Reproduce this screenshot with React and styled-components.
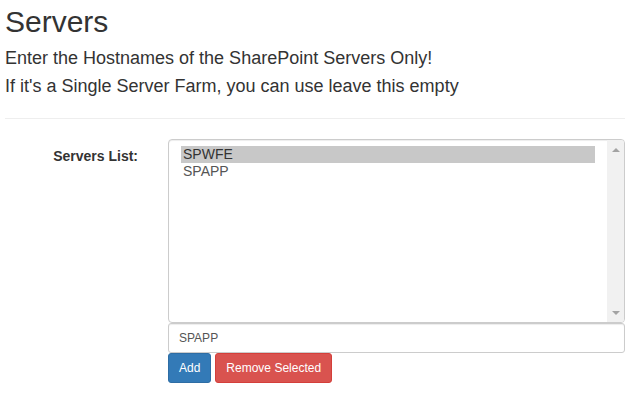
import React, { useState } from 'react'
import styled, { createGlobalStyle } from 'styled-components'

const GlobalStyle = createGlobalStyle`
  body {
    margin: 0;
    background: #fff;
    font-family: "Liberation Sans", Arial, Helvetica, sans-serif;
    font-size: 14px;
    color: #333;
  }
`

const Page = styled.div`
  padding: 5px 9px 0 5px;
`

const Title = styled.h2`
  margin: 0;
  font-size: 30px;
  font-weight: 500;
  line-height: 33px;
`

const Intro = styled.p`
  margin: ${p => (p.first ? '6px' : '0')} 0 0;
  font-size: 18px;
  line-height: 28px;
`

const Divider = styled.hr`
  margin: 18px 0 20px;
  border: 0;
  border-top: 1px solid #eee;
`

const FormRow = styled.div`
  display: grid;
  grid-template-columns: 133px 1fr;
  column-gap: 30px;
`

const Label = styled.label`
  padding-top: 7px;
  text-align: right;
  font-weight: bold;
  line-height: 20px;
`

const Controls = styled.div`
  display: flex;
  flex-direction: column;
`

const Listbox = styled.div`
  display: flex;
  height: 184px;
  box-sizing: border-box;
  border: 1px solid #ccc;
  border-radius: 4px;
  box-shadow: inset 0 1px 1px rgba(0, 0, 0, 0.075);
  overflow: hidden;
`

const Options = styled.div`
  flex: 1;
  padding: 6px 12px;
`

const Option = styled.div`
  height: 17px;
  line-height: 17px;
  padding-left: 2px;
  font-size: 14px;
  color: ${p => (p.selected ? '#333' : '#555')};
  background: ${p => (p.selected ? '#c8c8c8' : 'transparent')};
  cursor: default;
`

const Scrollbar = styled.div`
  width: 17px;
  background: #f1f1f1;
  display: flex;
  flex-direction: column;
  justify-content: space-between;
  align-items: center;
  padding: 8px 0 7px;
`

const Arrow = styled.span`
  width: 0;
  height: 0;
  border-left: 4px solid transparent;
  border-right: 4px solid transparent;
  ${p => (p.down ? 'border-top: 4px solid #a3a3a3;' : 'border-bottom: 4px solid #a3a3a3;')}
`

const TextInput = styled.input`
  height: 30px;
  box-sizing: border-box;
  padding: 5px 10px;
  border: 1px solid #ccc;
  border-radius: 3px;
  font-family: inherit;
  font-size: 12px;
  color: #555;
  box-shadow: inset 0 1px 1px rgba(0, 0, 0, 0.075);
  outline: none;
`

const Buttons = styled.div`
  display: flex;
  gap: 4px;
`

const Button = styled.button`
  height: 30px;
  padding: 5px 10px;
  border: 1px solid ${p => (p.danger ? '#d43f3a' : '#2e6da4')};
  border-radius: 3px;
  background: ${p => (p.danger ? '#d9534f' : '#337ab7')};
  color: #fff;
  font-family: inherit;
  font-size: 12px;
  line-height: 18px;
  cursor: pointer;
`

export default function App() {
  const [servers, setServers] = useState(['SPWFE', 'SPAPP'])
  const [selected, setSelected] = useState('SPWFE')
  const [value, setValue] = useState('SPAPP')

  const add = () => {
    if (value && !servers.includes(value)) setServers([...servers, value])
  }
  const remove = () => setServers(servers.filter(s => s !== selected))

  return (
    <Page>
      <GlobalStyle />
      <Title>Servers</Title>
      <Intro first>Enter the Hostnames of the SharePoint Servers Only!</Intro>
      <Intro>If it's a Single Server Farm, you can use leave this empty</Intro>
      <Divider />
      <FormRow>
        <Label>Servers List:</Label>
        <Controls>
          <Listbox>
            <Options>
              {servers.map(s => (
                <Option key={s} selected={s === selected} onClick={() => setSelected(s)}>
                  {s}
                </Option>
              ))}
            </Options>
            <Scrollbar>
              <Arrow />
              <Arrow down />
            </Scrollbar>
          </Listbox>
          <TextInput value={value} onChange={e => setValue(e.target.value)} />
          <Buttons>
            <Button onClick={add}>Add</Button>
            <Button danger onClick={remove}>Remove Selected</Button>
          </Buttons>
        </Controls>
      </FormRow>
    </Page>
  )
}
